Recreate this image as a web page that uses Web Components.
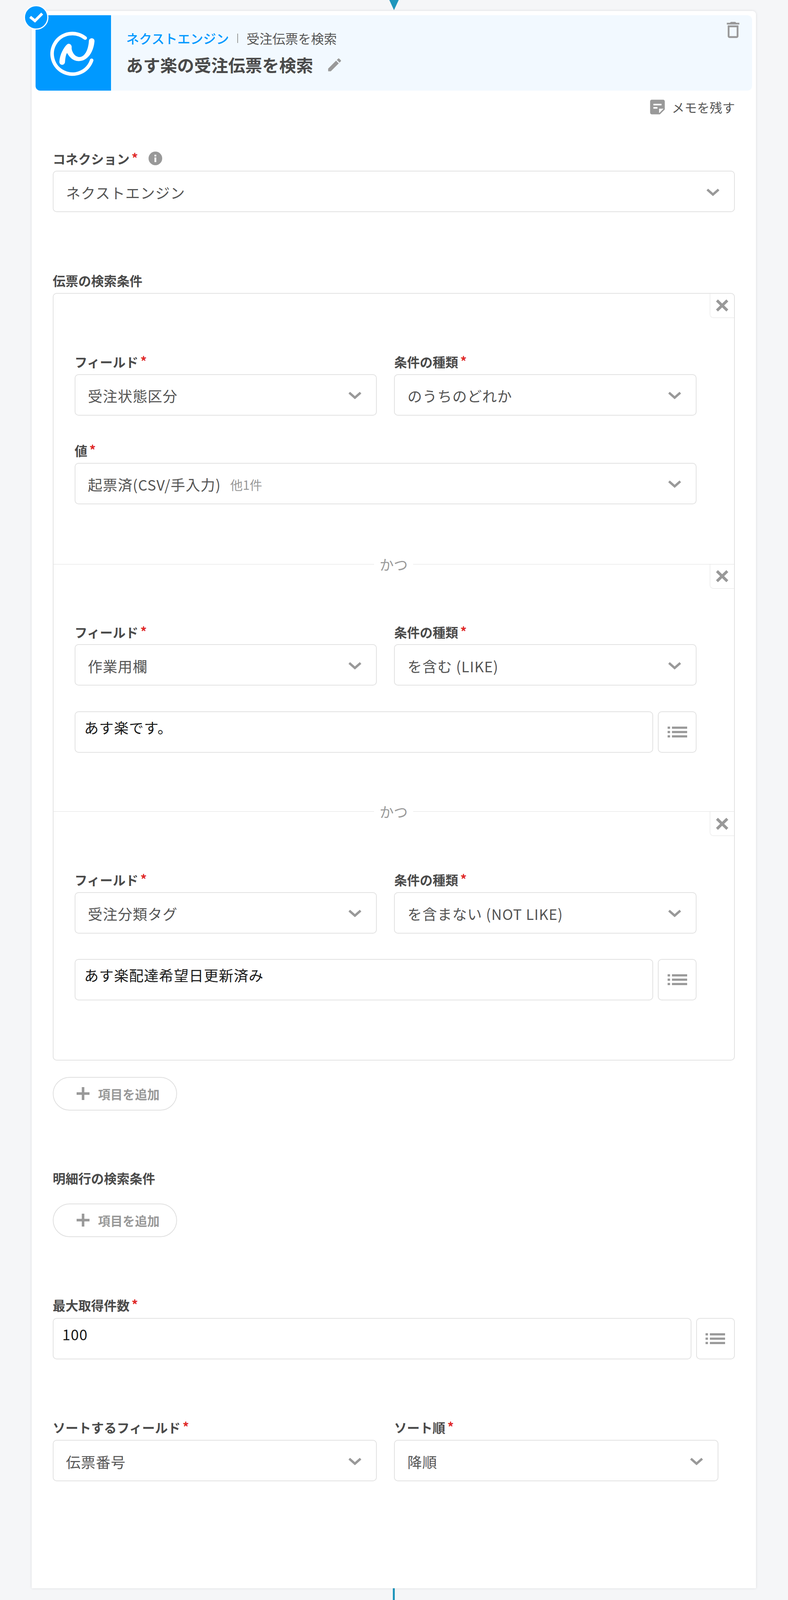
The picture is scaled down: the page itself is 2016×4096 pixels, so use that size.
<!DOCTYPE html>
<html lang="ja">
<head>
<meta charset="utf-8">
<title>あす楽の受注伝票を検索</title>
<style>
    html, body { margin: 0; padding: 0; background: #f5f6f8; }
    body { font-family: "Noto Sans CJK JP", "Noto Sans", sans-serif; }
    /* spacing between the blocks of the form */
    .connection { margin-top: 96px; }
    .search { margin-top: 158.9px; }
    .add-1 { margin-top: 42px; }
    .details { margin-top: 157px; --label-gap: 48.9px; }
    .limit { margin-top: 157.6px; --label-gap: 18px; }
    .sort { margin-top: 157.4px; --label-gap: 16.7px; }
    .sort-row { margin-right: 42px; }
    form-row + form-row { margin-top: 72.8px; }
    form-row + input-row { margin-top: 65.5px; }
    .r1 { --pad-top: 158px; --pad-bottom: 153px; }
    .r2 { --pad-top: 156.5px; --pad-bottom: 150.5px; }
    .r3 { --pad-top: 157.5px; --pad-bottom: 151.4px; }
</style>
</head>
<body>
<flow-page>
    <flow-step>
        <step-header slot="header" app="ネクストエンジン" action="受注伝票を検索" title-text="あす楽の受注伝票を検索"></step-header>

        <form-field class="connection" label="コネクション" required info>
            <select-box>ネクストエンジン</select-box>
        </form-field>

        <form-field class="search" label="伝票の検索条件">
            <condition-group>
                <condition-row class="r1">
                    <form-row>
                        <form-field label="フィールド" required><select-box>受注状態区分</select-box></form-field>
                        <form-field label="条件の種類" required><select-box>のうちのどれか</select-box></form-field>
                    </form-row>
                    <form-row single>
                        <form-field label="値" required><select-box>起票済(CSV/手入力)<span slot="extra">他1件</span></select-box></form-field>
                    </form-row>
                </condition-row>
                <condition-row class="r2" divider>
                    <form-row>
                        <form-field label="フィールド" required><select-box>作業用欄</select-box></form-field>
                        <form-field label="条件の種類" required><select-box>を含む (LIKE)</select-box></form-field>
                    </form-row>
                    <input-row>あす楽です。</input-row>
                </condition-row>
                <condition-row class="r3" divider>
                    <form-row>
                        <form-field label="フィールド" required><select-box>受注分類タグ</select-box></form-field>
                        <form-field label="条件の種類" required><select-box>を含まない (NOT LIKE)</select-box></form-field>
                    </form-row>
                    <input-row>あす楽配達希望日更新済み</input-row>
                </condition-row>
            </condition-group>
        </form-field>
        <add-button class="add-1">項目を追加</add-button>

        <form-field class="details" label="明細行の検索条件">
            <add-button>項目を追加</add-button>
        </form-field>

        <form-field class="limit" label="最大取得件数" required>
            <input-row>100</input-row>
        </form-field>

        <form-row class="sort-row sort">
            <form-field label="ソートするフィールド" required><select-box>伝票番号</select-box></form-field>
            <form-field label="ソート順" required><select-box>降順</select-box></form-field>
        </form-row>
    </flow-step>
</flow-page>

<script>
const CHEVRON = `<svg width="34" height="23" viewBox="0 0 40 27"><path d="M3 5 20 20 37 5" fill="none" stroke="#999" stroke-width="7"/></svg>`;
const CROSS = `<svg width="33" height="32" viewBox="0 0 42 41"><path d="M4 4 38 37M38 4 4 37" fill="none" stroke="#999" stroke-width="9"/></svg>`;
const LIST = `<svg width="50" height="28" viewBox="0 0 63 35" fill="#999"><rect width="8" height="7"/><rect y="14" width="8" height="7"/><rect y="28" width="8" height="7"/><rect x="14" width="49" height="7"/><rect x="14" y="14" width="49" height="7"/><rect x="14" y="28" width="49" height="7"/></svg>`;

class FlowPage extends HTMLElement {
    constructor() {
        super();
        this.attachShadow({ mode: 'open' });
        this.shadowRoot.innerHTML = `
            <style>
                :host {
                    display: flex;
                    flex-direction: column;
                    height: 4096px;
                    padding: 0 82px 0 81.1px;
                    box-sizing: border-box;
                    overflow: hidden;
                }
                .arrow { display: block; height: 27.6px; flex: none; align-self: center; }
                .line { flex: 1; width: 5.5px; align-self: center; background: #1f96bc; }
            </style>
            <svg class="arrow" width="24" height="27.6" viewBox="0 0 24 27.6"><path d="M0 0H24L12 26Z" fill="#1f96bc"/></svg>
            <slot></slot>
            <div class="line"></div>
        `;
    }
}

class FlowStep extends HTMLElement {
    constructor() {
        super();
        this.attachShadow({ mode: 'open' });
        this.shadowRoot.innerHTML = `
            <style>
                :host {
                    display: block;
                    position: relative;
                    flex: none;
                    background: #fff;
                    border-radius: 9px 9px 2px 2px;
                    box-shadow: 0 0 7px rgba(0, 0, 0, .11);
                    padding: 11px 10.2px 273.4px;
                    color: #4a4a4a;
                }
                .badge {
                    position: absolute;
                    left: -20.5px;
                    top: -15px;
                    width: 63px;
                    height: 63px;
                    box-sizing: border-box;
                    border: 3px solid #fff;
                    border-radius: 50%;
                    background: #09f;
                    display: flex;
                    align-items: center;
                    justify-content: center;
                }
                .memo {
                    display: flex;
                    justify-content: flex-end;
                    align-items: center;
                    gap: 12px;
                    height: 38px;
                    margin: 23.5px 43.6px 0 0;
                    font-size: 32.3px;
                    color: #555;
                }
                .form { padding: 0 44.1px 0 43.4px; }
            </style>
            <slot name="header"></slot>
            <div class="badge">
                <svg width="37" height="28" viewBox="0 0 48 36"><path d="M4 17 20 30 44 6" fill="none" stroke="#fff" stroke-width="9"/></svg>
            </div>
            <div class="memo">
                <svg width="50" height="50" viewBox="0 0 24 24" fill="#999"><path d="M19 3H4.99C3.89 3 3 3.9 3 5l.01 14c0 1.1.89 2 1.99 2h10l6-6V5c0-1.1-.9-2-2-2zM7 8h10v2H7V8zm5 6H7v-2h5v2zm2 5.5V14h5.5L14 19.5z"/></svg>
                <span>メモを残す</span>
            </div>
            <div class="form"><slot></slot></div>
        `;
    }
}

class StepHeader extends HTMLElement {
    constructor() {
        super();
        this.attachShadow({ mode: 'open' });
        this.shadowRoot.innerHTML = `
            <style>
                :host {
                    display: flex;
                    position: relative;
                    height: 193px;
                    background: #f2f9ff;
                    border-radius: 12px;
                    overflow: hidden;
                }
                .logo { width: 193px; height: 193px; flex: none; background: #09f; display: block; }
                .text { padding: 43.8px 0 0 38.5px; }
                .top {
                    display: flex;
                    align-items: center;
                    gap: 21.5px;
                    height: 32px;
                    font-size: 33px;
                    color: #555;
                }
                .app { color: #09f; font-weight: 500; }
                .sep { width: 2px; height: 24px; background: #999; }
                .title {
                    display: flex;
                    align-items: center;
                    height: 50px;
                    margin-top: 26.6px;
                    font-size: 43.5px;
                    font-weight: 700;
                    color: #4a4a4a;
                }
                .title svg { margin-left: 33px; }
                .trash { position: absolute; right: 20.5px; top: 10.3px; display: block; }
            </style>
            <svg class="logo" viewBox="168 87 736 736">
                <path d="M652 310A198 198 0 1 0 715 527" fill="none" stroke="#fff" stroke-width="35" stroke-linecap="round"/>
                <path fill="#fff" d="M400 540C405 470 440 405 475 372 495 355 525 375 520 405 518 425 540 495 600 495 660 490 685 400 688 340 690 303 743 303 743 340 735 440 680 535 590 535 530 535 495 490 475 455 460 480 458 515 455 545 450 582 400 580 400 540Z"/>
            </svg>
            <div class="text">
                <div class="top">
                    <span class="app">${this.getAttribute('app')}</span>
                    <span class="sep"></span>
                    <span>${this.getAttribute('action')}</span>
                </div>
                <div class="title">
                    <span>${this.getAttribute('title-text')}</span>
                    <svg width="44" height="44" viewBox="0 0 24 24" fill="#999"><path d="M3 17.25V21h3.75L17.81 9.94l-3.75-3.75L3 17.25zM20.71 7.04c.39-.39.39-1.02 0-1.41l-2.34-2.34c-.39-.39-1.02-.39-1.41 0l-1.83 1.83 3.75 3.75 1.83-1.83z"/></svg>
                </div>
            </div>
            <svg class="trash" width="55" height="55" viewBox="0 0 24 24" fill="#999"><path d="M16 9v10H8V9h8m-1.5-6h-5l-1 1H5v2h14V4h-3.5l-1-1zM18 7H6v12c0 1.1.9 2 2 2h8c1.1 0 2-.9 2-2V7z"/></svg>
        `;
    }
}

class FormField extends HTMLElement {
    constructor() {
        super();
        this.attachShadow({ mode: 'open' });
        const star = this.hasAttribute('required') ? '<span class="star">*</span>' : '';
        const info = this.hasAttribute('info')
            ? `<svg class="info" width="35" height="35" viewBox="0 0 35 35"><circle cx="17.5" cy="17.5" r="17.5" fill="#999"/><rect x="15.2" y="15" width="4.6" height="12" fill="#fff"/><rect x="15.2" y="8" width="4.6" height="4.6" fill="#fff"/></svg>`
            : '';
        this.shadowRoot.innerHTML = `
            <style>
                :host { display: block; }
                .label {
                    display: flex;
                    align-items: center;
                    height: 32px;
                    margin-bottom: var(--label-gap, 16px);
                    font-size: 32.8px;
                    font-weight: 700;
                    color: #4a4a4a;
                    white-space: nowrap;
                }
                .star { color: #e02a2a; margin-left: 5px; position: relative; top: -2px; }
                .info { margin-left: 27px; }
            </style>
            <div class="label"><span>${this.getAttribute('label')}</span>${star}${info}</div>
            <slot></slot>
        `;
    }
}

class FormRow extends HTMLElement {
    constructor() {
        super();
        this.attachShadow({ mode: 'open' });
        this.shadowRoot.innerHTML = `
            <style>
                :host { display: grid; grid-template-columns: 1fr 1fr; column-gap: 44px; }
                :host([single]) { grid-template-columns: 1fr; }
            </style>
            <slot></slot>
        `;
    }
}

class SelectBox extends HTMLElement {
    constructor() {
        super();
        this.attachShadow({ mode: 'open' });
        this.shadowRoot.innerHTML = `
            <style>
                :host {
                    display: flex;
                    align-items: center;
                    height: 106px;
                    box-sizing: border-box;
                    padding: 0 37px 0 32px;
                    border: 2px solid #e2e2e2;
                    border-radius: 10px;
                    background: #fff;
                    font-size: 37.2px;
                    letter-spacing: 1.1px;
                    color: #555;
                    white-space: nowrap;
                }
                .value { flex: 1; padding-top: 5px; display: flex; align-items: center; }
                svg { margin-top: 4px; }
                ::slotted([slot="extra"]) { margin-left: 24px; font-size: 32px; letter-spacing: 0; color: #999; }
            </style>
            <div class="value"><slot></slot><slot name="extra"></slot></div>
            ${CHEVRON}
        `;
    }
}

class InputRow extends HTMLElement {
    constructor() {
        super();
        this.attachShadow({ mode: 'open' });
        this.shadowRoot.innerHTML = `
            <style>
                :host { display: flex; gap: 12px; height: 106px; }
                .input {
                    flex: 1;
                    box-sizing: border-box;
                    padding: 14px 22.5px 0;
                    border: 2px solid #e2e2e2;
                    border-radius: 10px;
                    font-size: 37.2px;
                    letter-spacing: 1.1px;
                    line-height: 50px;
                    color: #1a1a1a;
                }
                .list {
                    flex: none;
                    width: 99px;
                    box-sizing: border-box;
                    border: 2px solid #e2e2e2;
                    border-radius: 10px;
                    display: flex;
                    align-items: center;
                    justify-content: center;
                }
            </style>
            <div class="input"><slot></slot></div>
            <div class="list">${LIST}</div>
        `;
    }
}

class ConditionGroup extends HTMLElement {
    constructor() {
        super();
        this.attachShadow({ mode: 'open' });
        this.shadowRoot.innerHTML = `
            <style>
                :host {
                    display: block;
                    border: 2px solid #e2e2e2;
                    border-radius: 10px;
                    overflow: hidden;
                }
            </style>
            <slot></slot>
        `;
    }
}

class ConditionRow extends HTMLElement {
    constructor() {
        super();
        this.attachShadow({ mode: 'open' });
        const divider = this.hasAttribute('divider') ? '<div class="and">かつ</div>' : '';
        this.shadowRoot.innerHTML = `
            <style>
                :host {
                    display: block;
                    position: relative;
                    padding: var(--pad-top) 95.6px var(--pad-bottom) 54px;
                }
                :host([divider]) { border-top: 1.5px solid #e0e0e0; }
                .close {
                    position: absolute;
                    top: 0;
                    right: 0;
                    width: 62px;
                    height: 62px;
                    box-sizing: border-box;
                    border-left: 1.5px solid #e2e2e2;
                    border-bottom: 1.5px solid #e2e2e2;
                    border-radius: 0 0 0 9px;
                    display: flex;
                    align-items: center;
                    justify-content: center;
                }
                .and {
                    position: absolute;
                    left: 50%;
                    top: -26px;
                    transform: translateX(-50%);
                    width: 100px;
                    height: 50px;
                    line-height: 50px;
                    text-align: center;
                    background: #fff;
                    font-size: 36px;
                    color: #999;
                }
            </style>
            ${divider}
            <div class="close">${CROSS}</div>
            <slot></slot>
        `;
    }
}

class AddButton extends HTMLElement {
    constructor() {
        super();
        this.attachShadow({ mode: 'open' });
        this.shadowRoot.innerHTML = `
            <style>
                :host {
                    display: flex;
                    align-items: center;
                    gap: 22px;
                    width: 318px;
                    height: 86px;
                    box-sizing: border-box;
                    padding-left: 59px;
                    border: 2px solid #e0e0e0;
                    border-radius: 43px;
                    font-size: 31.5px;
                    font-weight: 700;
                    color: #999;
                }
            </style>
            <svg width="33" height="33" viewBox="0 0 33 33"><path d="M0 16.5H33M16.5 0V33" stroke="#999" stroke-width="6.5" fill="none"/></svg>
            <slot></slot>
        `;
    }
}

customElements.define('flow-page', FlowPage);
customElements.define('flow-step', FlowStep);
customElements.define('step-header', StepHeader);
customElements.define('form-field', FormField);
customElements.define('form-row', FormRow);
customElements.define('select-box', SelectBox);
customElements.define('input-row', InputRow);
customElements.define('condition-group', ConditionGroup);
customElements.define('condition-row', ConditionRow);
customElements.define('add-button', AddButton);
</script>
</body>
</html>
